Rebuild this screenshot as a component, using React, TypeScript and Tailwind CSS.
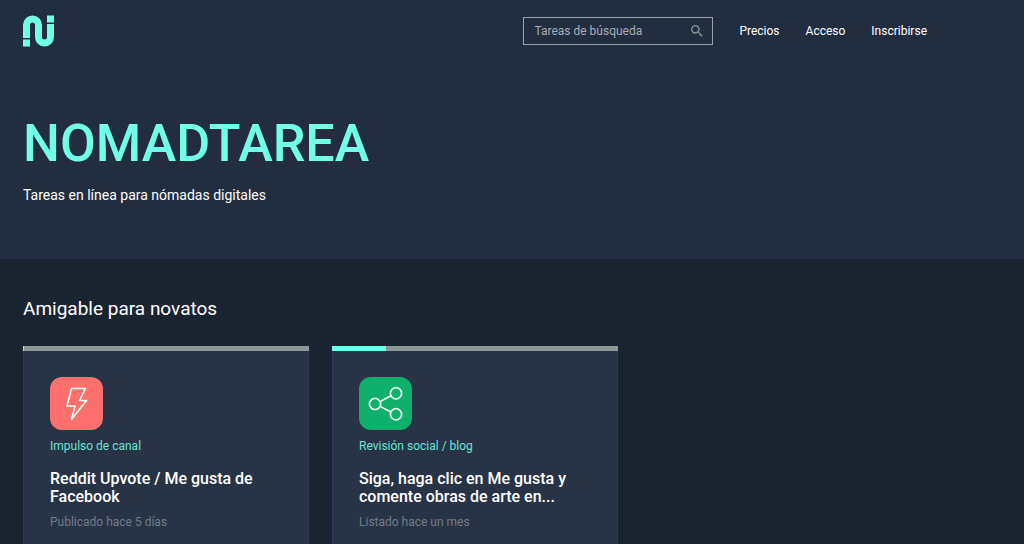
import type { ReactNode } from "react";

function Logo() {
  return (
    <svg viewBox="0 0 31 32" className="h-8 w-[31px]" fill="none" aria-hidden="true">
      <path
        d="M3.5 23V10a6 6 0 0 1 12 0V22a6 6 0 0 0 12 0V9"
        stroke="#72ffea"
        strokeWidth="7"
      />
      <path d="M0 24.5h7v7H0zM24 .5h7v7h-7z" fill="#72ffea" />
    </svg>
  );
}

function SearchIcon() {
  return (
    <svg viewBox="0 0 24 24" className="size-4 shrink-0" fill="#8b9594" aria-hidden="true">
      <path d="M15.5 14h-.79l-.28-.27A6.471 6.471 0 0 0 16 9.5 6.5 6.5 0 1 0 9.5 16c1.61 0 3.09-.59 4.23-1.57l.27.28v.79l5 4.99L20.49 19l-4.99-5zm-6 0C7.01 14 5 11.99 5 9.5S7.01 5 9.5 5 14 7.01 14 9.5 11.99 14 9.5 14z" />
    </svg>
  );
}

function BoltIcon() {
  return (
    <svg viewBox="0 0 53 53" className="size-[53px] rounded-xl bg-[#fd706e]" fill="none" aria-hidden="true">
      <path
        d="M21.5 11.5H35.5L29.5 23.5h7L21.5 42.5l3.5-13.5h-8z"
        stroke="#fff"
        strokeWidth="1.6"
        strokeLinejoin="round"
      />
    </svg>
  );
}

function ShareIcon() {
  return (
    <svg viewBox="0 0 53 53" className="size-[53px] rounded-xl bg-[#0eb06b]" fill="none" aria-hidden="true">
      <g stroke="#e9fff5" strokeWidth="1.7">
        <circle cx="16" cy="27" r="5.6" />
        <circle cx="37" cy="16.3" r="5.6" />
        <circle cx="37" cy="37.3" r="5.6" />
        <path d="M21 24.5 32 18.8M21 29.5l11 5.4" />
      </g>
    </svg>
  );
}

type Task = {
  icon: ReactNode;
  category: string;
  title: string;
  date: string;
  progress: number;
};

const tasks: Task[] = [
  {
    icon: <BoltIcon />,
    category: "Impulso de canal",
    title: "Reddit Upvote / Me gusta de Facebook",
    date: "Publicado hace 5 días",
    progress: 0.4,
  },
  {
    icon: <ShareIcon />,
    category: "Revisión social / blog",
    title: "Siga, haga clic en Me gusta y comente obras de arte en...",
    date: "Listado hace un mes",
    progress: 19,
  },
];

function TaskCard({ icon, category, title, date, progress }: Task) {
  return (
    <article className="flex flex-col bg-[#293346]">
      <div className="h-[5px] bg-[#8b9796]">
        <div className="h-full bg-[#72ffea]" style={{ width: `${progress}%` }} />
      </div>
      <div className="grow border-x border-[#303b4f] px-[26px] pt-[26px]">
        {icon}
        <p className="mt-2 text-xs leading-4 text-[#68e4d3]">{category}</p>
        <h3 className="mt-4 text-base leading-[18px] font-medium text-white">{title}</h3>
        <p className="mt-2 text-xs leading-4 text-[#727d87]">{date}</p>
      </div>
    </article>
  );
}

export default function App() {
  return (
    <div className="flex min-h-screen flex-col bg-[#1b2431] font-['Roboto',sans-serif] text-white">
      <header className="bg-[#222d3f] pr-[97px] pb-[54px] pl-[23px]">
        <nav className="flex items-center pt-[15px]">
          <a href="#" aria-label="Nomadtarea">
            <Logo />
          </a>
          <form className="ml-auto flex h-7 w-[190px] items-center border border-[#9ba2aa] pr-[7px] pl-2.5">
            <input
              type="search"
              aria-label="Tareas de búsqueda"
              placeholder="Tareas de búsqueda"
              className="min-w-0 grow bg-transparent text-xs leading-4 outline-none placeholder:text-[#a9aeb4]"
            />
            <SearchIcon />
          </form>
          <div className="ml-[26px] flex gap-[26px] text-xs leading-4">
            <a href="#">Precios</a>
            <a href="#">Acceso</a>
            <a href="#">Inscribirse</a>
          </div>
        </nav>
        <h1 className="mt-[65px] text-[52px] leading-[64px] font-medium text-[#72ffea]">NOMADTAREA</h1>
        <p className="mt-[9px] text-sm leading-5">Tareas en línea para nómadas digitales</p>
      </header>
      <main className="flex grow flex-col pt-9 pr-[97px] pl-[23px]">
        <h2 className="text-[19px] leading-7">Amigable para novatos</h2>
        <section className="mt-[23px] grid grow grid-cols-3 gap-[23px]">
          {tasks.map((task) => (
            <TaskCard key={task.category} {...task} />
          ))}
        </section>
      </main>
    </div>
  );
}
